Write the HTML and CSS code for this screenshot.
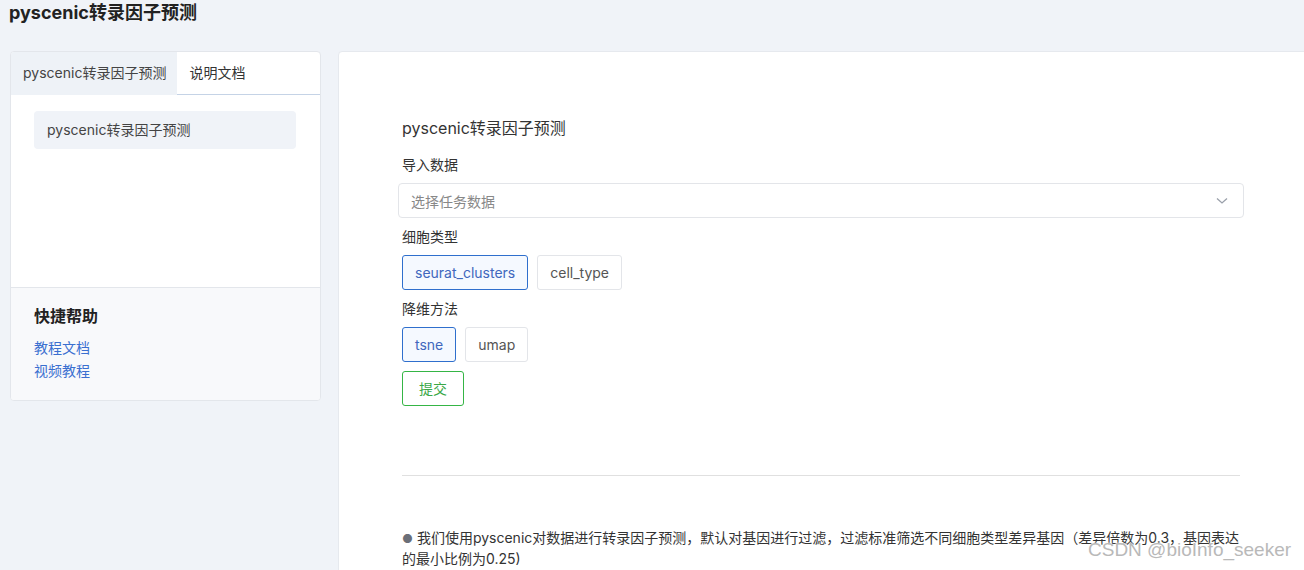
FILE: index.html
```html
<!DOCTYPE html>
<html lang="zh">
<head>
<meta charset="utf-8">
<link rel="stylesheet" href="styles.css">
</head>
<body>
<div class="page">
  <h1 class="title">pyscenic转录因子预测</h1>
  <div class="main">
    <aside class="side">
      <div class="tabs">
        <div class="tab active">pyscenic转录因子预测</div>
        <div class="tab">说明文档</div>
        <div class="tab-fill"></div>
      </div>
      <div class="menu">
        <div class="menu-item">pyscenic转录因子预测</div>
      </div>
      <div class="help">
        <div class="help-title">快捷帮助</div>
        <a class="help-link">教程文档</a>
        <a class="help-link">视频教程</a>
      </div>
    </aside>
    <section class="content">
      <h2 class="heading">pyscenic转录因子预测</h2>
      <div class="label">导入数据</div>
      <div class="select">
        <span class="placeholder">选择任务数据</span>
        <svg class="chev" width="12" height="8" viewBox="0 0 12 8"><path d="M1 1.5 L6 6 L11 1.5" fill="none" stroke="#9aa0aa" stroke-width="1.3"/></svg>
      </div>
      <div class="label">细胞类型</div>
      <div class="opts">
        <span class="opt on">seurat_clusters</span>
        <span class="opt">cell_type</span>
      </div>
      <div class="label">降维方法</div>
      <div class="opts">
        <span class="opt on">tsne</span>
        <span class="opt">umap</span>
      </div>
      <div class="submit-row"><span class="submit">提交</span></div>
      <div class="rule"></div>
      <p class="desc"><span class="dot">●</span> 我们使用pyscenic对数据进行转录因子预测，默认对基因进行过滤，过滤标准筛选不同细胞类型差异基因（差异倍数为0.3，基因表达的最小比例为0.25)</p>
    </section>
  </div>
</div>
<div class="watermark">CSDN @bioInfo_seeker</div>
</body>
</html>
```
FILE: styles.css
```css
* { box-sizing: border-box; }
html, body { margin: 0; padding: 0; }
body {
  background: #f0f3f8;
  font-family: "Inter", "Noto Sans CJK SC", sans-serif;
  color: #333;
  overflow: hidden;
  width: 1304px;
  height: 570px;
}
.page { padding: 0 0 0 10px; }
.title {
  margin: 0 0 0 -1px;
  padding: 2px 0 0;
  font-size: 18px;
  line-height: 22px;
  font-weight: 700;
  color: #222;
  height: 51px;
}
.main { display: flex; gap: 17px; align-items: flex-start; }
.side {
  width: 311px;
  flex: none;
  background: #fff;
  border: 1px solid #e3e6eb;
  border-radius: 4px;
  overflow: hidden;
}
.tabs { display: flex; height: 43px; }
.tab {
  padding: 0 12px;
  font-size: 14px;
  line-height: 42px;
  color: #333;
  border-bottom: 1px solid #c5d3e6;
}
.tab.active {
  background: #eef2f7;
  color: #444;
  border-bottom-color: transparent;
  padding-right: 11px;
}
.tab-fill { flex: 1; border-bottom: 1px solid #c5d3e6; }
.menu { padding: 16px 24px 0 23px; height: 192px; }
.menu-item {
  background: #f0f3f8;
  border-radius: 4px;
  height: 38px;
  line-height: 38px;
  padding-left: 13px;
  font-size: 14px;
  color: #444;
}
.help {
  background: #f8f9fb;
  border-top: 1px solid #e3e6eb;
  padding: 16px 23px 18px;
  display: flex;
  flex-direction: column;
}
.help-title {
  font-size: 16px;
  font-weight: 700;
  line-height: 24px;
  color: #222;
  margin-bottom: 8px;
}
.help-link {
  font-size: 14px;
  line-height: 23px;
  color: #3a6fd0;
}
.content {
  flex: none;
  width: 980px;
  height: 540px;
  background: #fff;
  border: 1px solid #e6e9ee;
  border-radius: 4px;
  padding: 65px 0 0 63px;
}
.heading {
  margin: 0 0 16px;
  font-size: 16px;
  line-height: 22px;
  font-weight: 400;
  color: #333;
}
.label {
  font-size: 14px;
  line-height: 20px;
  color: #333;
  margin-bottom: 8px;
}
.select {
  margin-left: -4px;
  width: 846px;
  height: 35px;
  border: 1px solid #e3e5e9;
  border-radius: 4px;
  display: flex;
  align-items: center;
  justify-content: space-between;
  padding: 0 15px 0 12px;
  margin-bottom: 9px;
}
.placeholder { font-size: 14px; color: #888; }
.opts { display: flex; gap: 9px; margin-bottom: 9px; }
.opt {
  height: 35px;
  line-height: 33px;
  padding: 0 12px;
  border: 1px solid #e3e5e9;
  border-radius: 3px;
  font-size: 14px;
  color: #555;
}
.opt.on {
  border-color: #2f6fcd;
  background: #f5f9ff;
  color: #4067bd;
}
.opts + .submit-row { margin-top: 1px; }
.submit-row { display: flex; }
.submit {
  height: 35px;
  line-height: 33px;
  padding: 0 16px;
  border: 1px solid #35b545;
  border-radius: 3px;
  font-size: 14px;
  color: #3aa847;
}
.rule {
  margin-top: 69px;
  width: 838px;
  height: 1px;
  background: #e0e0e0;
}
.desc {
  margin: 52px 0 0;
  width: 846px;
  font-size: 14px;
  line-height: 20px;
  color: #333;
}
.dot { color: #6b6f78; font-size: 12px; }
.watermark {
  position: absolute;
  left: 1088px;
  top: 539px;
  font-family: "Liberation Sans", sans-serif;
  font-size: 19px;
  line-height: 22px;
  color: #b9b9b9;
  text-shadow: 0 0 2px #fff, 0 0 1px #fff;
}
```
